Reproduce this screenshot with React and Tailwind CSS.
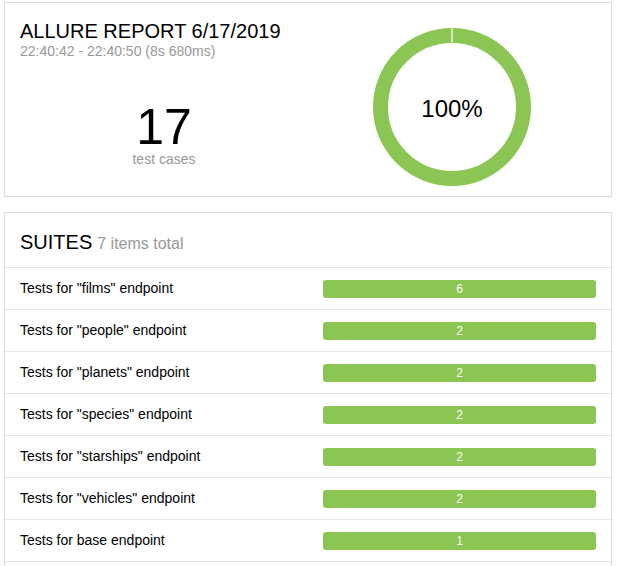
import React from 'react';

const suites = [
  { name: 'Tests for "films" endpoint', count: 6 },
  { name: 'Tests for "people" endpoint', count: 2 },
  { name: 'Tests for "planets" endpoint', count: 2 },
  { name: 'Tests for "species" endpoint', count: 2 },
  { name: 'Tests for "starships" endpoint', count: 2 },
  { name: 'Tests for "vehicles" endpoint', count: 2 },
  { name: 'Tests for base endpoint', count: 1 },
];

function Donut() {
  return (
    <div className="relative w-[158px] h-[158px]">
      <svg width="158" height="158" viewBox="0 0 158 158">
        <circle cx="79" cy="79" r="71.5" fill="none" stroke="#8bc553" strokeWidth="15" />
        <line x1="79" y1="0" x2="79" y2="16" stroke="#e8f3dd" strokeWidth="1.5" />
      </svg>
      <div className="absolute inset-0 flex items-center justify-center text-[24px] text-black pt-[3px]">100%</div>
    </div>
  );
}

export default function App() {
  return (
    <div className="min-h-screen bg-white pl-[4px] pr-[8px] pt-[2px] font-['Liberation_Sans',Arial,sans-serif]">
      <div className="border border-[#dddddd] h-[195px] px-[15px] flex">
        <div className="w-1/2 flex flex-col">
          <h1 className="text-[20px] leading-[22px] text-black mt-[17px]">ALLURE REPORT 6/17/2019</h1>
          <p className="text-[14px] leading-[18px] text-[#999999]">22:40:42 - 22:40:50 (8s 680ms)</p>
          <div className="flex flex-col items-center mt-[45px]">
            <div className="text-[50px] leading-[44px] text-black">17</div>
            <div className="text-[14px] leading-[16px] text-[#999999] mt-[2px]">test cases</div>
          </div>
        </div>
        <div className="w-1/2 flex items-start justify-center pt-[25px]">
          <Donut />
        </div>
      </div>

      <div className="border border-[#dddddd] mt-[15px]">
        <div className="h-[54px] px-[15px] flex items-baseline pt-[18px]">
          <span className="text-[20px] leading-[22px] text-black">SUITES</span>
          <span className="text-[16px] text-[#999999] ml-[5px]">7 items total</span>
        </div>
        {suites.map((s) => (
          <div key={s.name} className="border-t border-[#e5e5e5] h-[42px] px-[15px] flex items-center">
            <div className="w-[303px] text-[14px] text-black">{s.name}</div>
            <div className="flex-1 h-[18px] rounded-[3px] bg-[#8bc553] flex items-center justify-center text-[12px] text-white">
              {s.count}
            </div>
          </div>
        ))}
        <div className="border-t border-[#e5e5e5] h-[20px]"></div>
      </div>
    </div>
  );
}
